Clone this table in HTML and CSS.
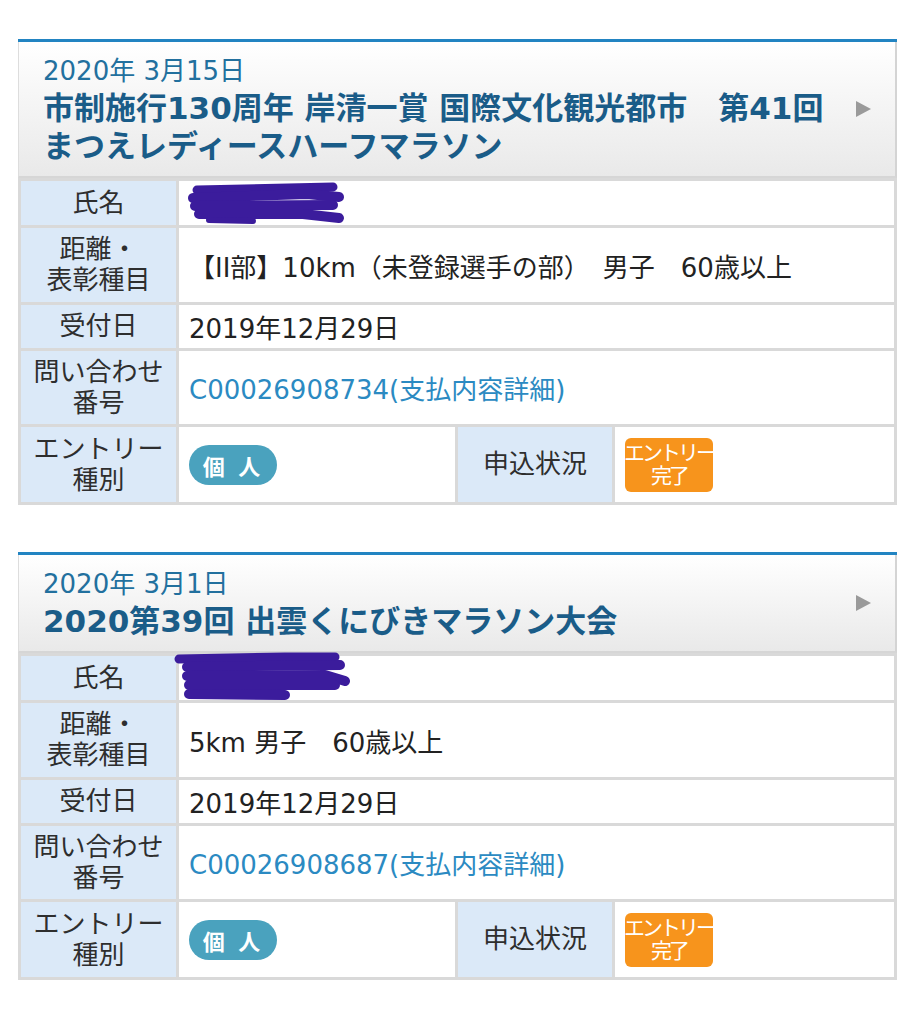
FILE: index.html
```html
<!DOCTYPE html>
<html lang="ja">
<head>
<meta charset="utf-8">
<title>エントリー履歴</title>
<link rel="stylesheet" href="styles.css">
</head>
<body>
<div class="list">
  <section class="card">
    <div class="head">
      <div class="head-text">
        <div class="date">2020年 3月15日</div>
        <div class="title">市制施行130周年 岸清一賞 国際文化観光都市　第41回<br>まつえレディースハーフマラソン</div>
      </div>
      <span class="arrow"></span>
    </div>
    <div class="tbl">
      <div class="lab">氏名</div>
      <div class="val name">
        <svg class="scribble" width="170" height="46" viewBox="0 0 170 46">
          <g fill="none" stroke="#3b1c9c" stroke-linecap="round" stroke-linejoin="round">
            <path d="M14 9 L150 6" stroke-width="9"/>
            <path d="M10 17 L124 13 L156 16" stroke-width="10"/>
            <path d="M12 25 L150 24" stroke-width="10"/>
            <path d="M16 33 L120 33 L156 37" stroke-width="10"/>
            <path d="M26 39 L70 40" stroke-width="6"/>
          </g>
        </svg>
      </div>
      <div class="lab two">距離・<br>表彰種目</div>
      <div class="val">【II部】10km（未登録選手の部）　男子　60歳以上</div>
      <div class="lab">受付日</div>
      <div class="val">2019年12月29日</div>
      <div class="lab two">問い合わせ<br>番号</div>
      <div class="val link">C00026908734(支払内容詳細)</div>
      <div class="lab two">エントリー<br>種別</div>
      <div class="val single"><span class="pill">個 人</span></div>
      <div class="lab">申込状況</div>
      <div class="val single"><span class="done">エントリー<br>完了</span></div>
    </div>
  </section>

  <section class="card">
    <div class="head">
      <div class="head-text">
        <div class="date">2020年 3月1日</div>
        <div class="title">2020第39回 出雲くにびきマラソン大会</div>
      </div>
      <span class="arrow"></span>
    </div>
    <div class="tbl">
      <div class="lab">氏名</div>
      <div class="val name">
        <svg class="scribble s2" width="180" height="52" viewBox="0 0 180 52">
          <g fill="none" stroke="#3b1c9c" stroke-linecap="round" stroke-linejoin="round">
            <path d="M4 6 L110 4 L160 4" stroke-width="9"/>
            <path d="M12 14 L165 12" stroke-width="10"/>
            <path d="M12 23 L150 22 L170 28" stroke-width="10"/>
            <path d="M14 32 L160 32" stroke-width="10"/>
            <path d="M14 41 L110 42" stroke-width="10"/>
          </g>
        </svg>
      </div>
      <div class="lab two">距離・<br>表彰種目</div>
      <div class="val">5km 男子　60歳以上</div>
      <div class="lab">受付日</div>
      <div class="val">2019年12月29日</div>
      <div class="lab two">問い合わせ<br>番号</div>
      <div class="val link">C00026908687(支払内容詳細)</div>
      <div class="lab two">エントリー<br>種別</div>
      <div class="val single"><span class="pill">個 人</span></div>
      <div class="lab">申込状況</div>
      <div class="val single"><span class="done">エントリー<br>完了</span></div>
    </div>
  </section>
</div>
</body>
</html>
```

FILE: styles.css
```css
html, body {
  margin: 0;
  padding: 0;
  background: #ffffff;
}

body {
  font-family: "DejaVu Sans", "Noto Sans CJK JP", sans-serif;
  color: #222222;
}

.list {
  padding: 39px 20px 0 18px;
  display: flex;
  flex-direction: column;
  gap: 47px;
}

.card {
  width: 879px;
  border-top: 3px solid #2284c2;
}

.head {
  display: flex;
  align-items: center;
  padding: 11px 24px 11px 24px;
  background: linear-gradient(#ffffff, #e9e9e9);
  border-left: 1px solid #dddddd;
  border-right: 2px solid #d4d4d4;
  border-bottom: 2px solid #d6d6d6;
}

.head-text {
  flex: 1;
}

.date {
  font-size: 26px;
  line-height: 36px;
  color: #22709e;
}

.title {
  font-size: 31px;
  line-height: 38px;
  font-weight: bold;
  color: #1a5c88;
  white-space: nowrap;
}

.arrow {
  width: 0;
  height: 0;
  border-top: 8px solid transparent;
  border-bottom: 8px solid transparent;
  border-left: 15px solid #9a9a9a;
  flex: none;
}

.tbl {
  display: grid;
  grid-template-columns: 155px 276px 154px 1fr;
  grid-template-rows: 44px 74px 43px 73px 75px;
  gap: 3px;
  padding: 3px;
  background: #d9d9d9;
}

.lab {
  background: #dbe9f8;
  display: flex;
  align-items: center;
  justify-content: center;
  text-align: center;
  font-size: 26px;
  line-height: 31px;
  color: #2e2e2e;
}

.val {
  grid-column: span 3;
  background: #ffffff;
  display: flex;
  align-items: center;
  padding-left: 10px;
  font-size: 26px;
  color: #222222;
  white-space: nowrap;
}

.val.single {
  grid-column: auto;
}

.val.link {
  color: #2b8ac2;
}

.val.name {
  position: relative;
}

.scribble {
  position: absolute;
  left: 4px;
  top: 0;
  overflow: visible;
}

.scribble.s2 {
  left: -4px;
  top: -3px;
}

.pill {
  display: inline-flex;
  align-items: center;
  justify-content: center;
  width: 88px;
  height: 40px;
  border-radius: 20px;
  background: #4aa2be;
  color: #ffffff;
  font-size: 22px;
  font-weight: bold;
  letter-spacing: 3px;
}

.done {
  display: inline-flex;
  align-items: center;
  justify-content: center;
  text-align: center;
  width: 88px;
  height: 54px;
  border-radius: 6px;
  background: #f7941c;
  color: #ffffff;
  font-size: 21px;
  line-height: 23px;
  letter-spacing: -3px;
}
```
